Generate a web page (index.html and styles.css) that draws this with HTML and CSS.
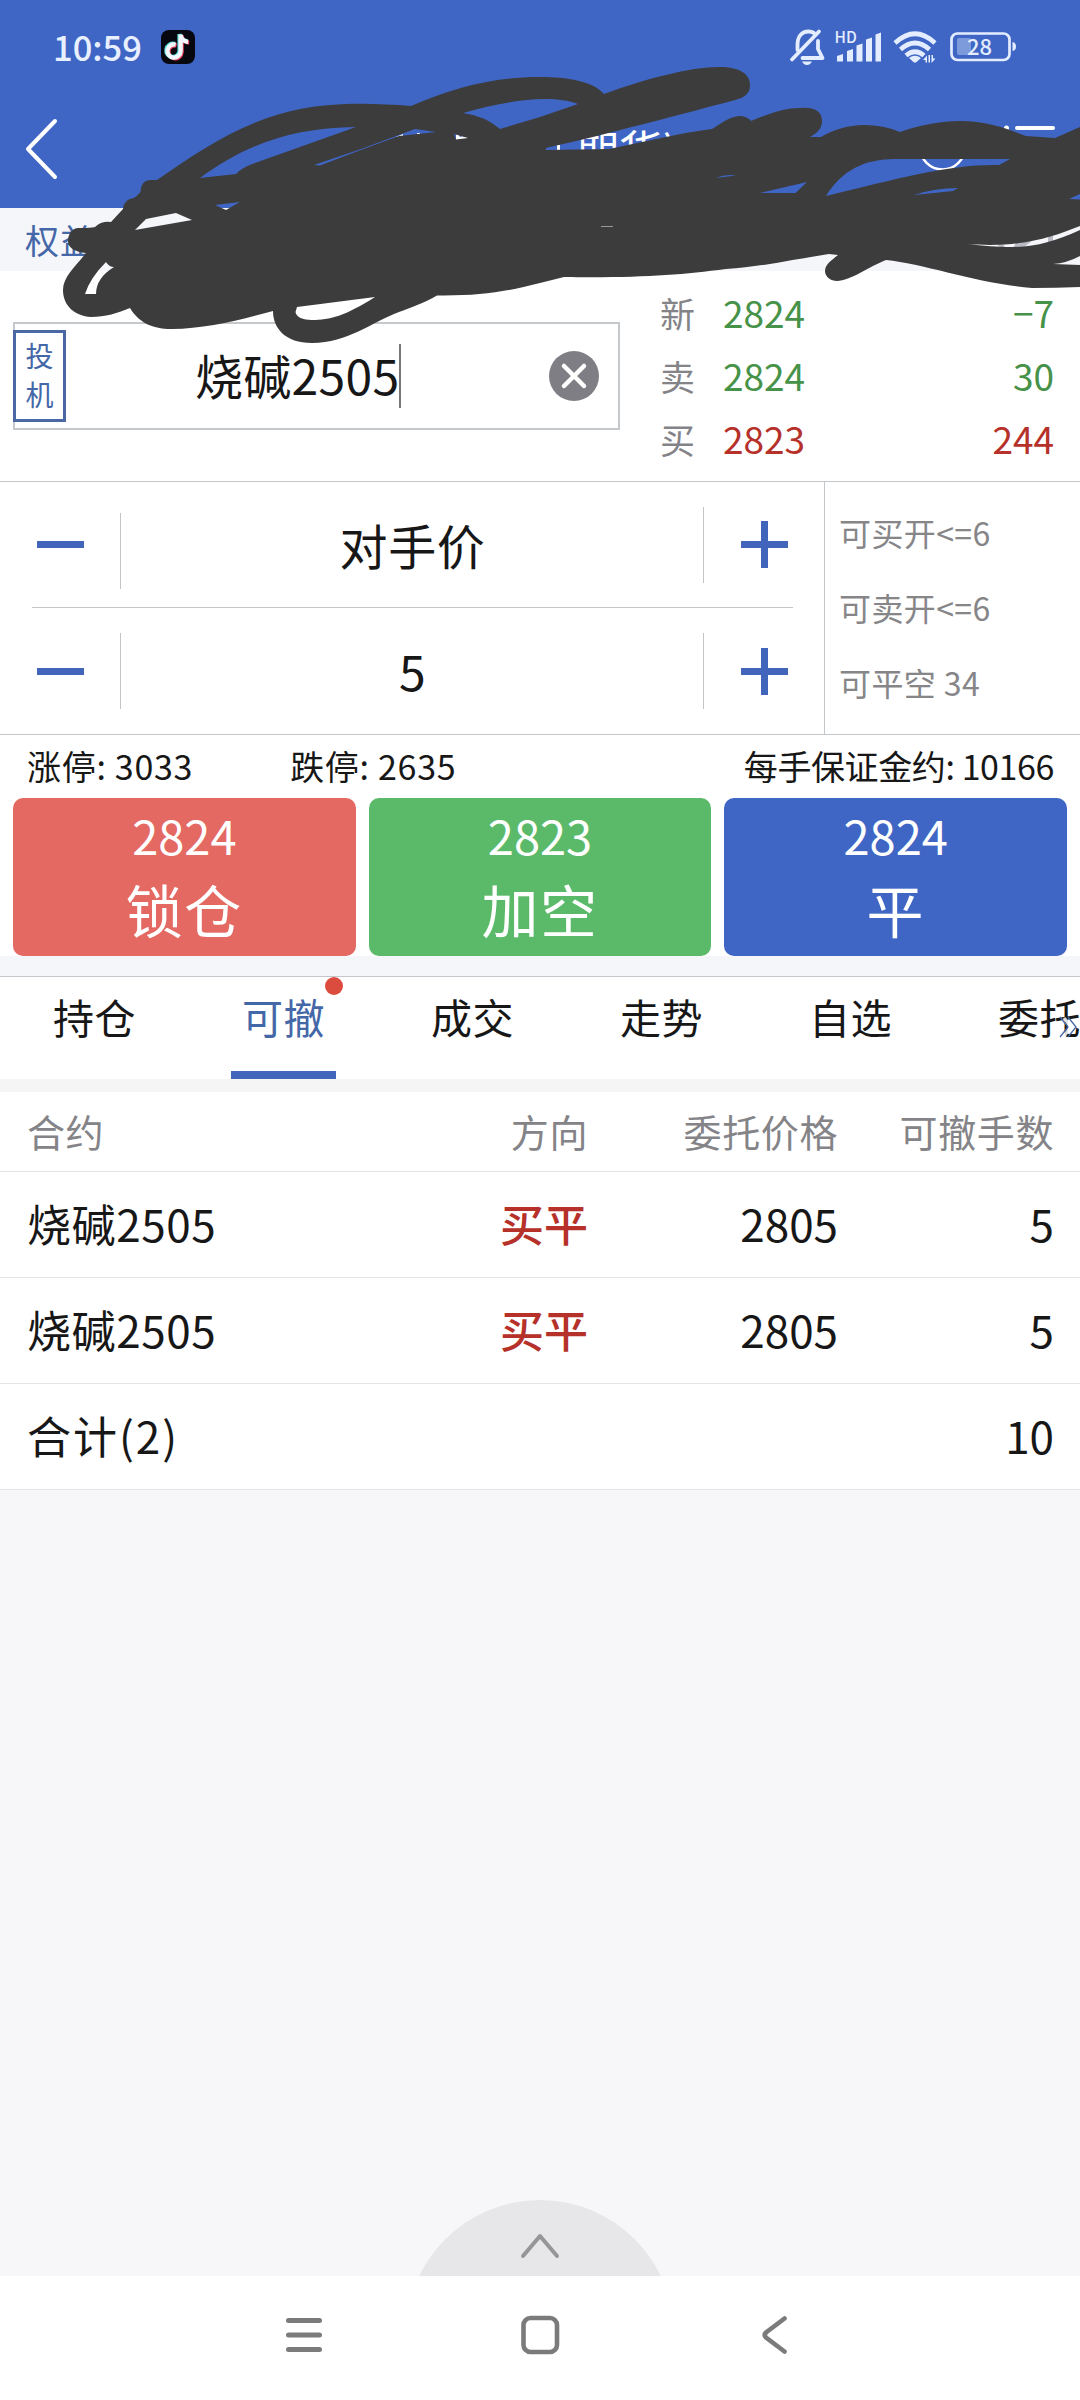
FILE: index.html
```html
<!DOCTYPE html>
<html lang="zh-CN">
<head>
<meta charset="utf-8">
<title>期货交易</title>
<link rel="stylesheet" href="styles.css">
</head>
<body>
<div class="screen">
  <div class="top">
    <div class="status">
      <span class="clock">10:59</span>
      <svg class="app-icon" width="34" height="34" viewBox="0 0 34 34">
        <rect width="34" height="34" rx="8" fill="#06070f"/>
        <g fill="none" stroke-width="4.400">
          <path d="M14.600 14.600a6.600 6.600 0 1 0 5 6.600V4.600c.4 4 3.400 7 7.600 7.200" stroke="#e2405c" transform="translate(1 .8)"/>
          <path d="M14.600 14.600a6.600 6.600 0 1 0 5 6.600V4.600c.4 4 3.400 7 7.600 7.200" stroke="#4fd6d6" transform="translate(-1 -.6)"/>
          <path d="M14.600 14.600a6.600 6.600 0 1 0 5 6.600V4.600c.4 4 3.400 7 7.600 7.200" stroke="#f2f6fa"/>
        </g>
      </svg>
      <svg class="status-icons" width="228" height="40" viewBox="789 27 228 40">
        <g fill="none" stroke="#e3edff" stroke-width="3.800" stroke-linecap="round">
          <path d="M792 59.500 819 31.500"/>
          <path d="M797.500 50v-5c0-8 4-13.500 11-13.500 2 0 4 .6 5.500 1.500M818 41v8l4.500 9h-20" stroke-linejoin="round"/>
        </g>
        <path d="M802 61.500h10q-2 3.500-5 3.500t-5-3.500z" fill="#e3edff"/>
        <text x="834.500" y="43" class="hd">HD</text>
        <g fill="#e3edff">
          <path d="M837 56l6-2v7.500h-6zM847 51l6-2v12.500h-6zM856.500 45.500l6-2v18h-6zM866 39.500l6-2v24h-6zM875.500 34.500l5.500-2v29h-5.500z"/>
          <path d="M909 58q6-4.500 12 0l-5 4.500h-2z"/>
          <path d="M927 55.500l-4 4.500h2.500v2.500h1.500zM928.500 55v7.500h1.500v-7.500zM931.500 55v8l4-4.500h-2.500v-3.500z"/>
        </g>
        <g fill="none" stroke="#e3edff" stroke-width="4.600">
          <path d="M895 43q20-18.500 40 0M900.500 49.500q14.500-13 29 0M906 55.500q9-7.500 18 0"/>
        </g>
        <rect x="957" y="38" width="14" height="17" rx="2" fill="#7d9adb"/>
        <rect x="951.500" y="33.500" width="58" height="26.500" rx="6" fill="none" stroke="#e3edff" stroke-width="2.700"/>
        <path d="M1012.500 42q3.500.5 3.500 4.500t-3.500 4.500z" fill="#e3edff"/>
        <text x="967" y="54.500" class="battery">28</text>
      </svg>
    </div>
    <div class="navbar">
      <svg class="back" width="36" height="64" viewBox="0 0 36 64"><path d="M31 4 4 32 31 60" fill="none" stroke="#fff" stroke-width="4" stroke-linecap="round" stroke-linejoin="round"/></svg>
      <span class="title">期货)</span>
      <svg class="tools" width="160" height="60" viewBox="916 120 160 60" fill="none" stroke="#fff">
        <circle cx="942.500" cy="148" r="22.500" stroke-width="2.500"/>
        <path d="M1017 129h36" stroke-width="4" stroke-linecap="round"/>
        <circle cx="1006.500" cy="129" r="2.500" fill="#fff" stroke="none"/>
      </svg>
    </div>
  </div>
  <div class="equity">权益</div>

  <div class="quote">
    <div class="contract">
      <div class="kind"><span>投</span><span>机</span></div>
      <div class="code">烧碱2505<i class="caret"></i></div>
      <svg class="clear" width="50" height="50" viewBox="0 0 50 50"><circle cx="25" cy="25" r="25" fill="#7f7e84"/><path d="M15 15 35 35M35 15 15 35" stroke="#fff" stroke-width="4.500" stroke-linecap="round"/></svg>
    </div>
    <div class="prices">
      <span class="lab">新</span><span class="up">2824</span><span class="up end">−7</span>
      <span class="lab">卖</span><span class="up">2824</span><span class="up end">30</span>
      <span class="lab">买</span><span class="down">2823</span><span class="down end">244</span>
    </div>
  </div>

  <div class="order">
    <div class="steppers">
      <div class="stepper first"><i class="minus"></i><i class="bar"></i><span>对手价</span><i class="bar raised"></i><i class="plus"></i></div>
      <div class="stepper"><i class="minus"></i><i class="bar"></i><span>5</span><i class="bar"></i><i class="plus"></i></div>
    </div>
    <div class="limits"><span>可买开&lt;=6</span><span>可卖开&lt;=6</span><span>可平空 34</span></div>
  </div>

  <div class="info"><span>涨停: 3033</span><span class="low">跌停: 2635</span><span class="margin">每手保证金约: 10166</span></div>
  <div class="actions">
    <div class="btn red"><b>2824</b><span>锁仓</span></div>
    <div class="btn green"><b>2823</b><span>加空</span></div>
    <div class="btn blue"><b>2824</b><span>平</span></div>
  </div>

  <div class="tabs">
    <span>持仓</span><span class="on">可撤<i class="dot"></i></span><span>成交</span><span>走势</span><span>自选</span><span>委托</span>
    <svg class="more" width="20" height="22" viewBox="0 0 20 22" fill="none"><path d="M5 2l7 9-7 9" stroke="#fff" stroke-width="3.500" opacity=".85"/><path d="M1 1l8 10-8 10M9 1l8 10-8 10" stroke="#4467a8" stroke-width="1.300"/></svg>
  </div>

  <div class="table">
    <div class="row head"><span>合约</span><span>方向</span><span>委托价格</span><span>可撤手数</span></div>
    <div class="row"><span>烧碱2505</span><span class="buy">买平</span><span>2805</span><span>5</span></div>
    <div class="row"><span>烧碱2505</span><span class="buy">买平</span><span>2805</span><span>5</span></div>
    <div class="row total"><span>合计(2)</span><span></span><span></span><span>10</span></div>
  </div>

  <div class="rest">
    <svg width="268" height="76" viewBox="0 0 268 76"><circle cx="134" cy="134" r="134" fill="#e7e7e9"/><path d="M117 56 134 36 151 56" fill="none" stroke="#969698" stroke-width="4" stroke-linecap="round" stroke-linejoin="round"/></svg>
  </div>
  <div class="sysnav">
    <svg width="40" height="44" viewBox="0 0 40 44"><path d="M4.500 7.500h31M4.500 22h31M4.500 36.500h31" stroke="#7b7b7b" stroke-width="5" stroke-linecap="round"/></svg>
    <svg width="40" height="44" viewBox="0 0 40 44"><rect x="3.500" y="5" width="33.500" height="34" rx="7" fill="none" stroke="#7b7b7b" stroke-width="4.600"/></svg>
    <svg width="40" height="44" viewBox="0 0 40 44"><path d="M28.500 5.500 10 19.500q-2.500 2.500 0 5L28.500 38.500" fill="none" stroke="#7b7b7b" stroke-width="4.600" stroke-linecap="round"/></svg>
  </div>

  <svg class="scribble" width="1080" height="350" viewBox="0 0 1080 350">
    <path d="M396 137l7-3v4zM417 133h3v2h-3zM456 134l3 1 1 2 3-1 1 1 4 0v2l-12 1zM557 145h3v6h-3z" fill="#fff"/>
    <path d="M995 243l5 4h5l-3-4zM1017 241l-4 7h10l10-8zM1048 236v8h5v-8z" fill="#b9bac4"/>
    <path fill="#3c3c3c" fill-rule="evenodd" d="M157 180C200 150 245 120 300 109C335 102 375 103 411 106C455 87 495 77 540 77C567 77 593 81 604 94C645 79 690 67 719 67C740 67 750 74 750 85C750 92 747 97 735 100C690 112 600 136 546 148L546 150 609 149C643 142 680 133 712 129C722 123 730 116 741 116Q748 117 751 121C770 113 785 108 800 108C814 107 822 111 822 121C822 129 817 133 810 137L821 137C832 130 848 125 864 125Q884 125 900 132C920 125 940 121 960 121C988 121 1008 129 1026 136L1055 138 1080 127V287Q1056 288 1032 288C980 284 925 264 886 260C870 266 850 281 837 281C831 281 825 277 825 271C825 264 832 260 838 255L829 254C790 260 760 267 726 269C680 275 640 278 564 277L540 283C505 292 480 296 437 295.500C424 303 410 308 399 312C372 322 348 343 312 343C285 343 273 328 273 311C240 320 205 329 172 329C150 329 138 321 130 308C118 313 105 317 91 317C75 316 63 306 63 290C63 277 75 267 86 253C75 252 68 248 68 241C68 233 73 227 80 228Q90 228 95 227Q101 221 111 222L123 209Q124 199 134 198Q137 196 140.500 192Q141 180 151 180Z
    M200 178C245 145 290 128 356 127L255 163Q241 168 236 174Z
    M463 113C500 102 550 93 578 104L540 117 500 129Q485 116 463 113Z
    M314 165L361 149 415 129 436 132 399 136 358 151 320 165.500Z
    M454 134L468 138 456 139.500Z
    M215 205L240 202 226 210Z
    M135 230L146 219 176 213 192 220Z
    M85 294Q90 278 106 262Q109 267 114 267Q96 278 96 294Z
    M297 307L375 297C345 316 330 320 312 320C303 320 296 317 295.500 312Z
    M760 193L807 182 795.500 193Z
    M826 196C842 170 865 159 895 159L1010 159 999 165C950 164 900 178 826 196Z
    M914 195Q935 188 958 188L953 191Z
    M716 178Q725 174 736 175.500Z
    M967 244C1020 248 1050 238 1080 226L1080 230C1040 248 1020 250 967 244Z
    M1053 264Q1067 263 1080 256L1080 265Z
    M1069 199L1080 194 1080 199.500Z
    M601 226.300h12v.4h-12z"/>
  </svg>
</div>
</body>
</html>
```
FILE: styles.css
```css
* { box-sizing: border-box; }
body {
  margin: 0;
  background: #fff;
  color: #171717;
  font-family: "Noto Sans CJK SC", "Noto Sans", sans-serif;
}
svg { display: block; flex: none; }
i { flex: none; }
.screen {
  position: relative;
  width: 1080px;
  height: 2400px;
  overflow: hidden;
  display: flex;
  flex-direction: column;
}
.screen > div { flex: none; }

.top { height: 208px; background: #4066c5; }
.status { height: 88px; display: flex; align-items: center; padding: 6px 63px 0 53px; }
.clock { width: 108px; font-size: 34.5px; font-weight: 500; line-height: 36px; color: #e8f0ff; padding-bottom: 3px; }
.status-icons { margin-left: auto; }
.hd { font-size: 15.5px; font-weight: 500; fill: #e3edff; }
.battery { font-size: 22px; font-weight: 500; fill: #e3edff; }
.navbar { height: 120px; display: flex; align-items: center; padding: 2px 4px 0 24px; }
.title { margin-left: 515px; font-size: 44px; line-height: 60px; color: #fff; }
.tools { margin-left: auto; }

.equity { height: 63px; padding-left: 25px; background: #f5f6f9; color: #4467a8; font-size: 34px; line-height: 63px; letter-spacing: 1px; }

.quote { height: 210px; display: flex; justify-content: space-between; padding: 0 26px 0 13px; }
.contract {
  width: 607px;
  height: 108px;
  margin-top: 51px;
  border: 2px solid #c6c9cb;
  display: flex;
  align-items: center;
  padding-right: 19px;
}
.kind {
  width: 53px;
  height: 92px;
  margin-left: -2px;
  border: 3px solid #4a68a3;
  display: flex;
  flex-direction: column;
  align-items: center;
  justify-content: center;
  font-size: 28px;
  line-height: 39px;
  color: #4467a8;
  padding-bottom: 3px;
}
.code { flex: 1; display: flex; align-items: center; padding-left: 129px; font-size: 48px; line-height: 60px; letter-spacing: .3px; padding-bottom: 5px; white-space: nowrap; }
.caret { width: 2px; height: 64px; background: #777; margin-top: 5px; }
.prices {
  width: 394px;
  padding-top: 10px;
  display: grid;
  grid-template-columns: 63px 1fr auto;
  grid-auto-rows: 63px;
  line-height: 63px;
  font-size: 37px;
}
.lab { font-size: 35px; color: #848488; }
.up { color: #479249; }
.down { color: #b5312a; }
.end { text-align: right; }

.order { height: 254px; display: flex; border-top: 1px solid #c3c6c8; border-bottom: 1px solid #c3c6c8; }
.steppers { width: 825px; border-right: 1px solid #c3c6c8; padding: 0 31px 0 32px; }
.stepper { height: 126px; display: flex; align-items: center; padding: 0 5px; }
.stepper.first { border-bottom: 1px solid #c3c6c8; }
.stepper span { flex: 1; text-align: center; font-size: 48px; line-height: 60px; padding-bottom: 2px; letter-spacing: .6px; }
.bar { width: 1px; height: 76px; margin: 0 37px 0 36px; background: #c3c6c8; }
.first .bar { margin-top: 12px; }
.first .raised { margin-top: 0; }
.minus, .plus { width: 47px; height: 47px; background: linear-gradient(#4065bb, #4065bb) center / 47px 7px no-repeat; }
.plus { background: linear-gradient(#4065bb, #4065bb) center / 47px 7px no-repeat, linear-gradient(#4065bb, #4065bb) center / 7px 47px no-repeat; }
.limits { padding: 13px 0 0 14px; display: flex; flex-direction: column; font-size: 32px; line-height: 75px; letter-spacing: .4px; color: #868689; }

.info { height: 63px; display: flex; padding: 1px 26px 0 27px; font-size: 34px; line-height: 60px; letter-spacing: .7px; }
.low { margin-left: 97px; }
.margin { margin-left: auto; letter-spacing: -.4px; }
.actions { height: 158px; display: grid; grid-template-columns: repeat(3, 1fr); gap: 13px; padding: 0 13px; }
.btn { border-radius: 10px; color: #fff; text-align: center; display: flex; flex-direction: column; padding-top: 5px; }
.btn b { font-size: 47px; font-weight: 400; line-height: 64px; }
.btn span { font-size: 57px; line-height: 82px; letter-spacing: 1.5px; }
.red { background: #e46962; }
.green { background: #5bba6a; }
.blue { background: #4066c5; }

.tabs {
  position: relative;
  height: 123px;
  border-top: 20px solid #f5f6f9;
  display: flex;
  box-shadow: inset 0 1px #c5c5cb;
  font-size: 41px;
  letter-spacing: .6px;
  line-height: 81px;
}
.tabs span { position: relative; flex: none; width: 189px; text-align: center; }
.on { color: #4467a8; }
.on::after { content: ""; display: block; width: 105px; height: 8px; margin: 14px 0 0 42px; background: #4065bb; }
.dot { position: absolute; left: 136px; top: 1px; width: 18px; height: 18px; border-radius: 50%; background: #dc4c3e; }
.more { position: absolute; left: 1059px; top: 40px; }

.table { border-top: 13px solid #f5f5f5; background: #fff; }
.row {
  height: 106px;
  border-bottom: 1px solid #e4e4e6;
  padding: 0 26px 0 27px;
  display: grid;
  grid-template-columns: 320px 241px 250px 1fr;
  font-size: 44px;
  line-height: 102px;
}
.row span:first-child { letter-spacing: .6px; }
.row span + span { text-align: right; }
.head { height: 80px; font-size: 38px; line-height: 77px; letter-spacing: .6px; color: #848488; }
.total span:first-child { letter-spacing: 2px; }
.buy { color: #b5312a; font-weight: 500; }

.rest { flex: 1 0 0 !important; background: #f7f7f9; display: flex; justify-content: center; align-items: flex-end; }
.sysnav { height: 124px; display: flex; justify-content: space-between; padding: 37px 284px 0 284px; background: #fff; }
.scribble { position: absolute; left: 0; top: 0; }
```
